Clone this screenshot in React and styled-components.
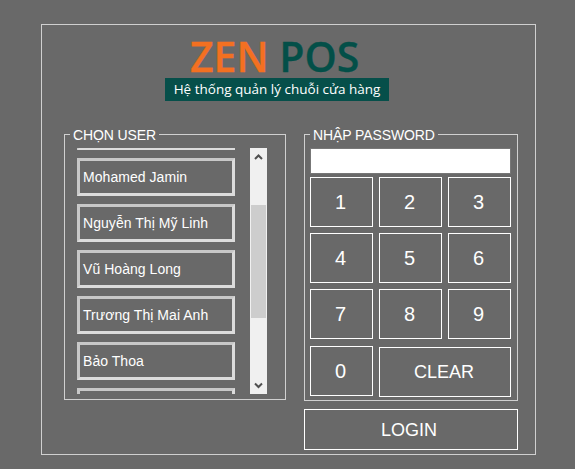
import React from "react";
import styled, { createGlobalStyle } from "styled-components";

const GlobalStyle = createGlobalStyle`
  * { box-sizing: border-box; }
  html, body { margin: 0; height: 100%; overflow: hidden; background: #696969; }
  body { font-family: "Liberation Sans", Arial, sans-serif; color: #fff; }
`;

const Frame = styled.div`
  width: 495px;
  height: 431px;
  margin: 24px 0 0 41px;
  padding: 0 16px 0 22px;
  border: 1px solid #d0d0d0;
`;

const Brand = styled.div`
  height: 101px;
  padding: 10px 0 0 101px;
`;

const Logo = styled.div`
  width: 224px;
  padding-left: 25px;
  font-family: "Open Sans", sans-serif;
  font-weight: 600;
  font-size: 41px;
  line-height: 43px;
  white-space: nowrap;
  -webkit-text-stroke: 0.3px;
`;

const LogoPart = styled.span`
  color: ${(p) => p.$color};
`;

const Tagline = styled.div`
  width: 224px;
  height: 23px;
  background: #064f4a;
  font-family: "Open Sans", sans-serif;
  font-weight: 500;
  font-size: 13.5px;
  line-height: 23px;
  text-align: center;
  white-space: nowrap;
`;

const Columns = styled.div`
  display: flex;
  gap: 18px;
`;

const Group = styled.fieldset`
  margin: 0;
  min-width: 0;
  width: ${(p) => p.$width}px;
  height: ${(p) => p.$height}px;
  padding: 6px 0 0;
  border: 1px solid #d0d0d0;
`;

const GroupTitle = styled.legend`
  margin-left: 5px;
  padding: 2px 3px 0;
  font-size: 14px;
  line-height: 14px;
  letter-spacing: -0.1px;
  color: #fff;
`;

const UserPicker = styled.div`
  display: flex;
  gap: 15px;
  height: 246px;
  margin-left: 12px;
`;

const UserList = styled.div`
  width: 158px;
  height: 246px;
  overflow: hidden;
`;

const UserItems = styled.div`
  display: flex;
  flex-direction: column;
  gap: 8px;
  margin-top: -36px;
`;

const UserItem = styled.button`
  flex: none;
  width: 158px;
  height: 38px;
  padding: 0 0 0 3px;
  background: transparent;
  border: 3px solid;
  border-color: #c8c8c8 #dcdcdc #dcdcdc #c8c8c8;
  color: #fff;
  font: 14px "Liberation Sans", Arial, sans-serif;
  letter-spacing: 0.05px;
  text-align: left;
`;

const Scrollbar = styled.div`
  display: flex;
  flex-direction: column;
  align-items: center;
  width: 17px;
  height: 246px;
  background: #f0f0f0;
`;

const ScrollArrow = styled.svg`
  flex: none;
  width: 17px;
  height: 17px;
  margin-top: ${(p) => (p.$end ? "auto" : "0")};
`;

const ScrollThumb = styled.div`
  width: 15px;
  height: 113px;
  margin-top: 40px;
  background: #cdcdcd;
`;

const KeyPanel = styled.div`
  display: flex;
  flex-direction: column;
  gap: 3px;
  width: 201px;
  margin-left: 5px;
`;

const PasswordInput = styled.input`
  width: 201px;
  height: 26px;
  padding: 0 4px;
  background: #fff;
  border: 1px solid #777;
  outline: none;
`;

const Keys = styled.div`
  display: grid;
  grid-template-columns: repeat(3, 63px);
  grid-template-rows: 50px 50px 50px 52px;
  gap: 6px;
`;

const Key = styled.button`
  height: 50px;
  margin-top: ${(p) => p.$shift || 0}px;
  padding: 0 2px 0 0;
  grid-column: ${(p) => (p.$wide ? "span 2" : "auto")};
  background: transparent;
  border: 1px solid #fff;
  color: #fff;
  font: ${(p) => (p.$wide ? 18 : 20)}px "Liberation Sans", Arial, sans-serif;
`;

const RightColumn = styled.div`
  display: flex;
  flex-direction: column;
  gap: 8px;
`;

const LoginButton = styled.button`
  width: 214px;
  height: 41px;
  padding: 1px 4px 0 0;
  background: transparent;
  border: 1px solid #fff;
  color: #fff;
  font: 18px "Liberation Sans", Arial, sans-serif;
`;

const users = ["", "Mohamed Jamin", "Nguyễn Thị Mỹ Linh", "Vũ Hoàng Long", "Trương Thị Mai Anh", "Bảo Thoa", ""];
const digits = ["1", "2", "3", "4", "5", "6", "7", "8", "9"];

export default function App() {
  return (
    <>
      <GlobalStyle />
      <Frame>
        <Brand>
          <Logo>
            <LogoPart $color="#f37021">ZEN</LogoPart> <LogoPart $color="#034f48">POS</LogoPart>
          </Logo>
          <Tagline>Hệ thống quản lý chuỗi cửa hàng</Tagline>
        </Brand>
        <Columns>
          <Group $width={222} $height={274}>
            <GroupTitle>CHỌN USER</GroupTitle>
            <UserPicker>
              <UserList>
                <UserItems>
                  {users.map((name, i) => (
                    <UserItem key={i}>{name}</UserItem>
                  ))}
                </UserItems>
              </UserList>
              <Scrollbar>
                <ScrollArrow viewBox="0 0 17 17">
                  <path d="M5 11 L8.5 7.5 L12 11" fill="none" stroke="#505050" strokeWidth="2" />
                </ScrollArrow>
                <ScrollThumb />
                <ScrollArrow $end viewBox="0 0 17 17">
                  <path d="M5 6.5 L8.5 10 L12 6.5" fill="none" stroke="#505050" strokeWidth="2" />
                </ScrollArrow>
              </Scrollbar>
            </UserPicker>
          </Group>
          <RightColumn>
            <Group $width={214} $height={275}>
              <GroupTitle>NHẬP PASSWORD</GroupTitle>
              <KeyPanel>
                <PasswordInput type="password" />
                <Keys>
                  {digits.map((d) => (
                    <Key key={d}>{d}</Key>
                  ))}
                  <Key $shift={1}>0</Key>
                  <Key $wide $shift={2}>CLEAR</Key>
                </Keys>
              </KeyPanel>
            </Group>
            <LoginButton>LOGIN</LoginButton>
          </RightColumn>
        </Columns>
      </Frame>
    </>
  );
}
